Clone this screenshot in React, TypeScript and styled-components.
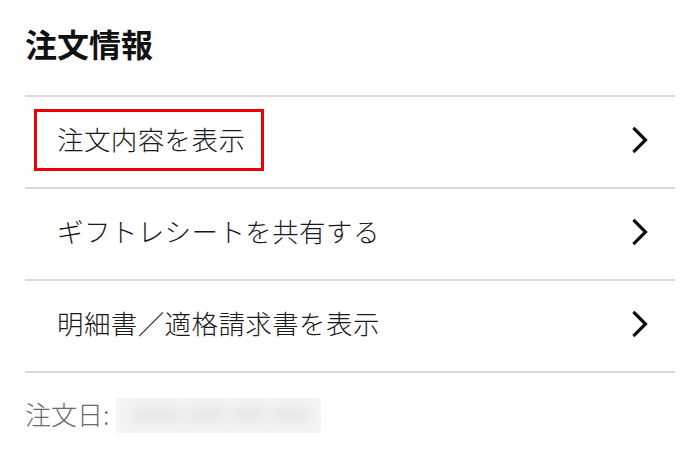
import React from "react";
import styled, { createGlobalStyle } from "styled-components";

const Global = createGlobalStyle`
  html, body { margin: 0; padding: 0; background: #ffffff; }
  body { font-family: "Noto Sans CJK JP", "Noto Sans", sans-serif; color: #111111; }
`;

const Page = styled.div`
  width: 700px;
  height: 462px;
  box-sizing: border-box;
  padding: 0 25px;
  overflow: hidden;
`;

const Title = styled.h2`
  margin: 20px 0 29px;
  font-size: 32px;
  line-height: 46px;
  font-weight: 700;
  color: #111111;
`;

const List = styled.div`
  display: flex;
  flex-direction: column;
  border-bottom: 2px solid #d8dada;
`;

const Row = styled.div`
  display: flex;
  align-items: center;
  justify-content: space-between;
  border-top: 2px solid #d8dada;
  padding: 0 26px 4px 9px;
  box-sizing: content-box;
  height: 86px;
`;

const Label = styled.span<{ $highlighted?: boolean }>`
  display: flex;
  align-items: center;
  padding: 0 16px 4px 20px;
  box-sizing: border-box;
  height: 62px;
  border: 3px solid ${(p) => (p.$highlighted ? "#ee0000" : "transparent")};
  font-size: 26.5px;
  font-weight: 300;
  color: #1a1a1a;
  letter-spacing: 0.4px;
`;

const Chevron = styled.svg`
  width: 18px;
  height: 28px;
  flex: none;
`;

const DateLine = styled.div`
  display: flex;
  align-items: center;
  gap: 6px;
  margin-top: 24px;
  height: 36px;
`;

const DateLabel = styled.span`
  font-size: 26px;
  font-weight: 300;
  color: #6a6a6a;
  padding-bottom: 3px;
`;

const Blurred = styled.div`
  position: relative;
  width: 205px;
  height: 35px;
  background: #f4f4f4;
  overflow: hidden;
`;

const Smudge = styled.span<{ $x: number; $w: number }>`
  position: absolute;
  top: 10px;
  height: 14px;
  left: ${(p) => p.$x}px;
  width: ${(p) => p.$w}px;
  background: #e6e6e6;
  border-radius: 7px;
  filter: blur(6px);
`;

const ChevronIcon = () => (
  <Chevron viewBox="0 0 18 28">
    <polyline
      points="3.5,3 14.5,14 3.5,25"
      fill="none"
      stroke="#111111"
      strokeWidth="3.2"
      strokeLinecap="square"
      strokeLinejoin="miter"
    />
  </Chevron>
);

const items = [
  { label: "注文内容を表示", highlighted: true },
  { label: "ギフトレシートを共有する", highlighted: false },
  { label: "明細書／適格請求書を表示", highlighted: false },
];

export default function App() {
  return (
    <>
      <Global />
      <Page>
        <Title>注文情報</Title>
        <List>
          {items.map((it) => (
            <Row key={it.label}>
              <Label $highlighted={it.highlighted}>{it.label}</Label>
              <ChevronIcon />
            </Row>
          ))}
        </List>
        <DateLine>
          <DateLabel>注文日:</DateLabel>
          <Blurred>
            <Smudge $x={15} $w={50} />
            <Smudge $x={70} $w={40} />
            <Smudge $x={115} $w={35} />
            <Smudge $x={155} $w={40} />
          </Blurred>
        </DateLine>
      </Page>
    </>
  );
}
